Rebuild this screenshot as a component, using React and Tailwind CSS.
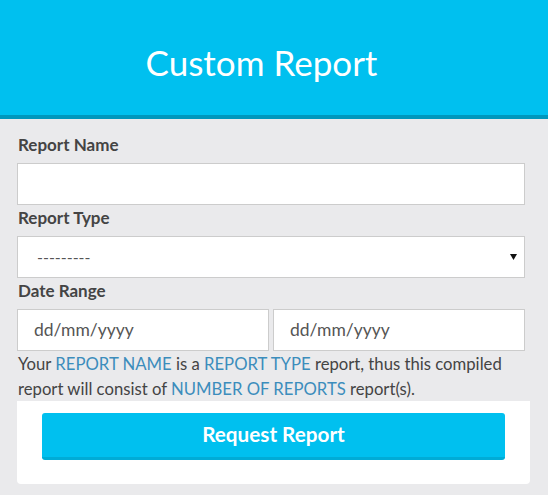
export default function App() {
  return (
    <div className="w-[548px] h-[495px] bg-[#eaeaec] overflow-hidden font-['Lato',sans-serif]">
      <div className="h-[119px] bg-[#00c0ef] border-b-4 border-[#0097bc] flex items-center justify-center pt-[8px] pr-[25px]">
        <h1 className="text-[35px] leading-[40px] text-white font-normal">Custom Report</h1>
      </div>
      <div className="pt-[16px] pl-[17px] pr-[23px]">
        <div className="text-[17px] leading-[20px] font-bold text-[#444] mb-[8px] pl-px">Report Name</div>
        <div className="h-[42px] bg-white border border-[#cccccc]"></div>
        <div className="text-[17px] leading-[20px] font-bold text-[#444] mt-[3px] mb-[8px] pl-px">Report Type</div>
        <div className="h-[42px] bg-white border border-[#cccccc] flex items-center justify-between pl-[19px] pr-[7px]">
          <span className="text-[16px] text-[#555]">---------</span>
          <svg width="7" height="6" viewBox="0 0 7 6"><path d="M0 0h7L3.5 6z" fill="#111" /></svg>
        </div>
        <div className="text-[17px] leading-[20px] font-bold text-[#444] mt-[3px] mb-[8px] pl-px">Date Range</div>
        <div className="flex gap-[4px]">
          <div className="flex-1 h-[42px] bg-white border border-[#cccccc] flex items-center pl-[16px]">
            <span className="text-[17.5px] text-[#555]">dd/mm/yyyy</span>
          </div>
          <div className="flex-1 h-[42px] bg-white border border-[#cccccc] flex items-center pl-[16px]">
            <span className="text-[17.5px] text-[#555]">dd/mm/yyyy</span>
          </div>
        </div>
        <p className="text-[16.7px] leading-[25px] text-[#444] mt-px pl-px">
          Your <span className="text-[#3c8dbc]">REPORT NAME</span> is a <span className="text-[#3c8dbc]">REPORT TYPE</span> report, thus this compiled report will consist of <span className="text-[#3c8dbc]">NUMBER OF REPORTS</span> report(s).
        </p>
        <div className="w-[513px] bg-white rounded-b-[4px] pt-[12px] pb-[24px] px-[25px] -mt-px">
          <button className="w-full h-[47px] bg-[#00c0ef] border-b-[3px] border-[#00acd6] rounded-[3px] text-white text-[20.7px] font-bold">Request Report</button>
        </div>
      </div>
    </div>
  );
}
